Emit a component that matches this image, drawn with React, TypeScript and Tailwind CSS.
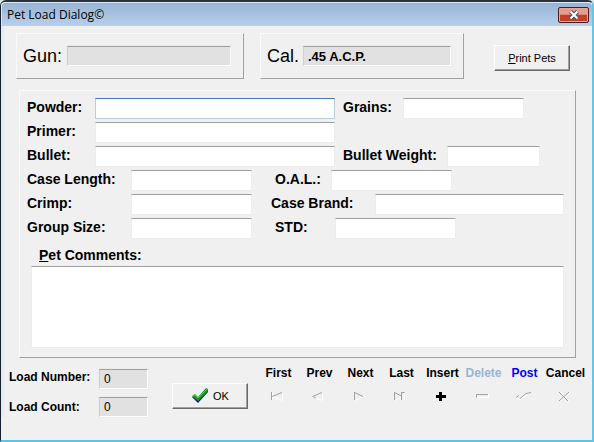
import { useState } from "react";

const labelClass = "shrink-0 text-sm/[18px] font-bold text-black";
const inputClass =
    "h-[21px] min-w-0 border border-[#ececec] border-t-[#a0a0a0] bg-white px-1 text-[13px] font-bold focus:outline-none";
const focusedInputClass =
    "h-[21px] min-w-0 border border-[#b5cfe7] border-t-[#3d7bad] bg-white px-1 text-[13px] font-bold focus:outline-none";
const readOnlyClass =
    "min-w-0 border border-white border-t-[#a0a0a0] border-l-[#d0d0d0] bg-[#e1e1e1] px-1 text-black shadow-[0_0_0_1px_#ececec] focus:outline-none";
const buttonClass =
    "flex h-[26px] w-[76px] items-center justify-center border border-t-white border-l-white border-r-[#696969] border-b-[#696969] bg-[#f0f0f0] text-[11px] text-black shadow-[inset_-1px_-1px_0_#a0a0a0]";
const panelClass =
    "border border-t-[#fafafa] border-l-[#fafafa] border-r-[#a0a0a0] border-b-[#a0a0a0]";

// shade is the dark edge of the disabled glyph, light is its highlight
const navigator = [
    { name: "First", color: "text-black", shade: "M1.5 0v8M2 4.5 12 .5", light: "M2.5 8V1M3 5l9 3.5M12.5 1v7" },
    { name: "Prev", color: "text-black", shade: "M1.5 4.5 11 .5M2 4.5l3 1.5", light: "M3 5l8 3.5M11.5 1v7" },
    { name: "Next", color: "text-black", shade: "M2.5 0v8M2.5.5 11 4.5", light: "M3.5 8.5 11 5" },
    { name: "Last", color: "text-black", shade: "M1.5 0v8M1.5.5 8.5 4M8.5 8V.5h3", light: "M2.5 8.5 8 5.5M11.5 1v7.5" },
    { name: "Insert", color: "text-black", shade: "", light: "" },
    { name: "Delete", color: "text-[#99b4d1]", shade: "M1.5 5.5v-3H13", light: "M2 5.5h11.5v-3" },
    { name: "Post", color: "text-[#0000ff]", shade: "M0 5.5 3 3.5M4 6.5 10 1.5 15 .5", light: "M1 6.5 4 7.5 11 2.5" },
    { name: "Cancel", color: "text-black", shade: "M2 0l9 9M12 0 2 9", light: "M3 0l9 9M13 0 3 9" },
];

function Field({ id, label, labelWidth, width, focused = false }: any) {
    return (
        <>
            <label htmlFor={id} className={`${labelClass} ${labelWidth}`}>
                {label}
            </label>
            <input
                id={id}
                type="text"
                className={`${focused ? focusedInputClass : inputClass} ${width}`}
            />
        </>
    );
}

function NavIcon({ name, shade, light }: { name: string; shade: string; light: string }) {
    if (name === "Insert") {
        return (
            <svg width="14" height="10" viewBox="0 0 14 10" className="mr-1 overflow-visible">
                <path d="M5 0h3v3h4v3H8v3H5V6H2V3h3z" fill="#000" />
            </svg>
        );
    }
    return (
        <svg width="14" height="10" viewBox="0 0 14 10" fill="none" className="mr-1 overflow-visible">
            <path d={light} stroke="#fff" />
            <path d={shade} stroke="#a0a0a0" />
        </svg>
    );
}

export default function App() {
    const [comments, setComments] = useState("");

    return (
        <div className="bg-[#dfeaea]">
            <div className="flex min-h-screen flex-col rounded-t-md border-2 border-t-[#26323c] border-r-[#6cc5e0] border-b-[#5ec4e0] border-l border-l-[#17202e] bg-[#f0f0f0] font-['Liberation_Sans',Arial,sans-serif]">
                <header className="flex h-6 items-center justify-between rounded-t border-t border-l border-[#dceaf7] bg-linear-to-b from-[#98b4d4] to-[#b7d0ec] pr-[3px] pl-[5px]">
                    <h1 className="font-['Open_Sans','Noto_Sans',sans-serif] text-xs text-black">
                        Pet Load Dialog©
                    </h1>
                    <button
                        aria-label="Close"
                        className="flex h-4 w-[31px] items-center justify-center rounded-xs border border-[#431d24] bg-linear-to-b from-[#e39d8d] from-45% to-[#c2402a] to-50% shadow-[inset_0_0_0_1px_#e9a696]"
                    >
                        <svg width="12" height="10" viewBox="0 0 12 10">
                            <path d="M2.5 1.5 9.5 8.5M9.5 1.5 2.5 8.5" stroke="#50535f" strokeWidth="4" />
                            <path d="M2.5 1.5 9.5 8.5M9.5 1.5 2.5 8.5" stroke="#fff" strokeWidth="2" />
                        </svg>
                    </button>
                </header>

                <main className="border-l-3 border-[#e3ebf3]">
                    <div className="flex items-start pt-[7px] pr-[22px] pl-3">
                        <div className={`flex h-[46px] w-[228px] items-center pr-3 pl-[6px] ${panelClass}`}>
                            <label htmlFor="gun" className="w-11 shrink-0 text-lg text-black">
                                Gun:
                            </label>
                            <input id="gun" readOnly className={`h-5 flex-1 ${readOnlyClass}`} />
                        </div>
                        <div className={`ml-4 flex h-[46px] w-[204px] items-center pr-3 pl-[6px] ${panelClass}`}>
                            <label htmlFor="cal" className="w-9 shrink-0 text-lg text-black">
                                Cal.
                            </label>
                            <input
                                id="cal"
                                readOnly
                                value=".45 A.C.P."
                                className={`h-5 flex-1 text-[13px] font-bold ${readOnlyClass}`}
                            />
                        </div>
                        <button className={`mt-3 ml-auto ${buttonClass}`}>
                            <span>
                                <u>P</u>rint Pets
                            </span>
                        </button>
                    </div>

                    <div className={`mt-[11px] mr-4 ml-[15px] pt-[7px] pr-[11px] pb-[9px] pl-[7px] ${panelClass}`}>
                        <div className="flex flex-col gap-[3px]">
                            <div className="flex items-start">
                                <Field id="powder" label="Powder:" labelWidth="w-[68px]" width="w-60" focused />
                                <span className="w-2" />
                                <Field id="grains" label="Grains:" labelWidth="w-[60px]" width="w-[121px]" />
                            </div>
                            <div className="flex items-start">
                                <Field id="primer" label="Primer:" labelWidth="w-[68px]" width="w-60" />
                            </div>
                            <div className="flex items-start">
                                <Field id="bullet" label="Bullet:" labelWidth="w-[68px]" width="w-60" />
                                <span className="w-2" />
                                <Field id="weight" label="Bullet Weight:" labelWidth="w-[104px]" width="w-[93px]" />
                            </div>
                            <div className="flex items-start">
                                <Field id="length" label="Case Length:" labelWidth="w-[104px]" width="w-[121px]" />
                                <span className="w-[23px]" />
                                <Field id="oal" label="O.A.L.:" labelWidth="w-14" width="w-[121px]" />
                            </div>
                            <div className="flex items-start">
                                <Field id="crimp" label="Crimp:" labelWidth="w-[104px]" width="w-[121px]" />
                                <span className="w-[19px]" />
                                <Field id="brand" label="Case Brand:" labelWidth="w-[104px]" width="flex-1" />
                            </div>
                            <div className="flex items-start">
                                <Field id="group" label="Group Size:" labelWidth="w-[104px]" width="w-[121px]" />
                                <span className="w-[23px]" />
                                <Field id="std" label="STD:" labelWidth="w-[60px]" width="w-[121px]" />
                            </div>
                        </div>
                        <label htmlFor="comments" className={`mt-[7px] ml-3 block ${labelClass}`}>
                            <u>P</u>et Comments:
                        </label>
                        <div className="mt-[2px] pl-1">
                            <textarea
                                id="comments"
                                value={comments}
                                onChange={(e) => setComments(e.target.value)}
                                className="block h-[82px] w-full resize-none border border-[#ececec] border-t-[#a0a0a0] bg-white px-1 text-[13px] focus:outline-none"
                            />
                        </div>
                    </div>

                    <div className="flex items-start pt-[7px] pr-[6px] pl-[5px]">
                        <div className="flex flex-col gap-2 pt-1">
                            <div className="flex items-start">
                                <label htmlFor="number" className="w-[90px] text-xs font-bold text-black">
                                    Load Number:
                                </label>
                                <input id="number" readOnly value="0" className={`h-5 w-[49px] text-xs ${readOnlyClass}`} />
                            </div>
                            <div className="flex items-center">
                                <label htmlFor="count" className="w-[90px] text-xs font-bold text-black">
                                    Load Count:
                                </label>
                                <input id="count" readOnly value="0" className={`h-5 w-[49px] text-xs ${readOnlyClass}`} />
                            </div>
                        </div>
                        <button className={`mt-[18px] ml-6 gap-1 ${buttonClass}`}>
                            <svg width="18" height="16" viewBox="0 0 18 16">
                                <path d="M1 9 4 7l3 3 8-9h2v3L7 15z" fill="#10207a" />
                                <path d="M1 8 4 6l3 3 8-9 2 1v2L7 13z" fill="#12a012" />
                                <path d="M2 8 4 7l3 3 9-9" fill="none" stroke="#43d843" />
                            </svg>
                            OK
                        </button>
                        <div className="ml-auto grid grid-cols-[repeat(8,41px)]">
                            {navigator.map((item) => (
                                <button
                                    key={item.name}
                                    disabled={item.name !== "Insert"}
                                    className={`flex flex-col items-center gap-[11px] text-xs font-bold ${item.color}`}
                                >
                                    {item.name}
                                    <NavIcon name={item.name} shade={item.shade} light={item.light} />
                                </button>
                            ))}
                        </div>
                    </div>
                </main>
            </div>
        </div>
    );
}
